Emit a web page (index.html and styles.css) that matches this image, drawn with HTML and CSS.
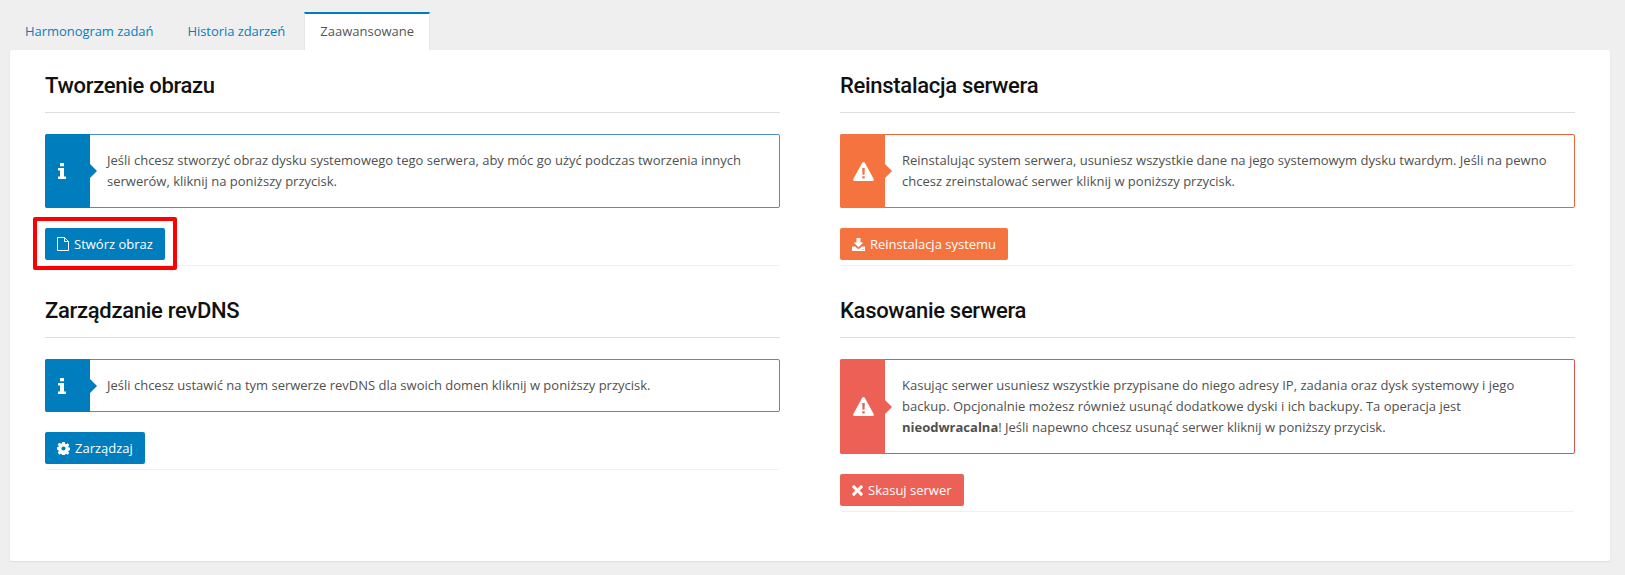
FILE: index.html
```html
<!DOCTYPE html>
<html lang="pl">
<head>
    <meta charset="UTF-8">
    <meta name="viewport" content="width=device-width, initial-scale=1.0">
    <title>Zaawansowane</title>
    <link rel="stylesheet" href="styles.css">
</head>
<body>
    <ul class="tabs">
        <li class="tab">Harmonogram zadań</li>
        <li class="tab">Historia zdarzeń</li>
        <li class="tab tab-active">Zaawansowane</li>
    </ul>

    <div class="panel">
        <div class="column">
            <section class="block">
                <h2 class="block-title">Tworzenie obrazu</h2>
                <div class="alert alert-info">
                    <div class="alert-icon">
                        <svg width="8" height="16" viewBox="0 0 10 18" preserveAspectRatio="none"><path fill="#fff" d="M2.500 0h5v3.600h-5zM0 5.600h7.500v9.600H10V18H0v-2.800h2.500V8.400H0z"/></svg>
                    </div>
                    <p class="alert-text">Jeśli chcesz stworzyć obraz dysku systemowego tego serwera, aby móc go użyć podczas tworzenia innych serwerów, kliknij na poniższy przycisk.</p>
                </div>
                <div class="actions">
                    <span class="highlight">
                        <button class="btn btn-info">
                            <svg width="12" height="14" viewBox="0 0 12 14"><path fill="none" stroke="#fff" d="M.5.500h7l4 4v9H.5zM7.500.500v4h4"/></svg>
                            Stwórz obraz
                        </button>
                    </span>
                </div>
            </section>

            <section class="block">
                <h2 class="block-title">Zarządzanie revDNS</h2>
                <div class="alert alert-info">
                    <div class="alert-icon">
                        <svg width="8" height="16" viewBox="0 0 10 18" preserveAspectRatio="none"><path fill="#fff" d="M2.500 0h5v3.600h-5zM0 5.600h7.500v9.600H10V18H0v-2.800h2.500V8.400H0z"/></svg>
                    </div>
                    <p class="alert-text">Jeśli chcesz ustawić na tym serwerze revDNS dla swoich domen kliknij w poniższy przycisk.</p>
                </div>
                <div class="actions">
                    <button class="btn btn-info">
                        <svg width="13" height="13" viewBox="0 0 13 13"><path fill="#fff" fill-rule="evenodd" d="M5.300 0h2.400l.4 1.800 1 .5 1.500-1.100 1.700 1.700-1.100 1.500.5 1 1.300.4v2.400l-1.300.4-.5 1 1.100 1.500-1.700 1.700-1.500-1.100-1 .5-.4 1.800H5.300l-.4-1.800-1-.5-1.500 1.100L.7 10.600l1.100-1.500-.5-1L0 7.700V5.300l1.300-.4.5-1L.7 2.400 2.400.7l1.500 1.100 1-.5zM6.500 4.400a2.100 2.100 0 1 0 0 4.200 2.100 2.100 0 0 0 0-4.200z"/></svg>
                        Zarządzaj
                    </button>
                </div>
            </section>
        </div>

        <div class="column">
            <section class="block">
                <h2 class="block-title">Reinstalacja serwera</h2>
                <div class="alert alert-warning">
                    <div class="alert-icon">
                        <svg width="21" height="19" viewBox="0 0 21 19"><path fill="#fff" fill-rule="evenodd" d="M10.500 0c.6 0 1 .3 1.300.8l9 16.400c.5 1-.2 1.800-1.200 1.800H1.400c-1 0-1.700-.9-1.200-1.800l9-16.400c.3-.5.7-.8 1.300-.8zM9.200 6l.3 6.800h2L11.800 6zM9.300 14.300v2.300h2.400v-2.300z"/></svg>
                    </div>
                    <p class="alert-text">Reinstalując system serwera, usuniesz wszystkie dane na jego systemowym dysku twardym. Jeśli na pewno chcesz zreinstalować serwer kliknij w poniższy przycisk.</p>
                </div>
                <div class="actions">
                    <button class="btn btn-warning">
                        <svg width="13" height="13" viewBox="0 0 13 13"><path fill="#fff" fill-rule="evenodd" d="M4.500 0h4v4.500h2.800L6.500 9.300 1.700 4.500h2.800zM0 8.500h3.200l2.300 2.300h2l2.300-2.300H13V13H0zM9.800 10.900v.9h.9v-.9zM11.300 10.900v.9h.9v-.9z"/></svg>
                        Reinstalacja systemu
                    </button>
                </div>
            </section>

            <section class="block">
                <h2 class="block-title">Kasowanie serwera</h2>
                <div class="alert alert-danger">
                    <div class="alert-icon">
                        <svg width="21" height="19" viewBox="0 0 21 19"><path fill="#fff" fill-rule="evenodd" d="M10.500 0c.6 0 1 .3 1.300.8l9 16.400c.5 1-.2 1.800-1.200 1.800H1.400c-1 0-1.700-.9-1.200-1.800l9-16.400c.3-.5.7-.8 1.300-.8zM9.200 6l.3 6.800h2L11.800 6zM9.300 14.300v2.300h2.400v-2.300z"/></svg>
                    </div>
                    <p class="alert-text">Kasując serwer usuniesz wszystkie przypisane do niego adresy IP, zadania oraz dysk systemowy i jego backup. Opcjonalnie możesz również usunąć dodatkowe dyski i ich backupy. Ta operacja jest <strong>nieodwracalna</strong>! Jeśli napewno chcesz usunąć serwer kliknij w poniższy przycisk.</p>
                </div>
                <div class="actions">
                    <button class="btn btn-danger">
                        <svg width="11" height="11" viewBox="0 0 11 11"><path fill="#fff" d="M2.400.3l3.100 3.100L8.600.3c.3-.3.7-.3 1 0l1.100 1.100c.3.3.3.7 0 1L7.600 5.500l3.100 3.100c.3.3.3.7 0 1l-1.100 1.100c-.3.3-.7.3-1 0L5.500 7.600l-3.100 3.100c-.3.3-.7.3-1 0L.3 9.600c-.3-.3-.3-.7 0-1l3.100-3.100L.3 2.400c-.3-.3-.3-.7 0-1L1.400.3c.3-.3.7-.3 1 0z"/></svg>
                        Skasuj serwer
                    </button>
                </div>
            </section>
        </div>
    </div>
</body>
</html>
```

FILE: styles.css
```css
* {
    margin: 0;
    padding: 0;
    box-sizing: border-box;
}

body {
    font-family: "Open Sans", sans-serif;
    font-size: 13px;
    line-height: 21px;
    background: #efefef;
    color: #505050;
    padding: 12px 15px 14px 10px;
}

.tabs {
    display: flex;
    gap: 4px;
    list-style: none;
    height: 38px;
}

.tab {
    padding: 9px 15px 0;
    color: #0a7dbd;
    font-size: 13px;
    letter-spacing: -0.05px;
}

.tab-active {
    background: #fff;
    border-top: 2px solid #007dbc;
    border-left: 1px solid #e6e6e6;
    border-right: 1px solid #e6e6e6;
    padding-top: 7px;
    letter-spacing: 0;
    color: #555;
}

.panel {
    display: grid;
    grid-template-columns: 735px 735px;
    column-gap: 60px;
    height: 511px;
    padding: 0 35px;
    background: #fff;
    border-radius: 2px;
    box-shadow: 0 1px 2px rgba(0, 0, 0, 0.08);
}

.block {
    padding-top: 15px;
}

.block + .block {
    padding-top: 24px;
}

.block-title {
    height: 48px;
    font-family: Roboto, sans-serif;
    font-size: 22px;
    font-weight: 500;
    line-height: 42px;
    letter-spacing: -0.3px;
    color: #111;
    border-bottom: 1px solid #ddd;
    margin-bottom: 21px;
}

.alert {
    display: flex;
    align-items: center;
    border: 1px solid;
    border-radius: 2px;
    background: #fff;
}

.alert-icon {
    position: relative;
    align-self: stretch;
    flex: 0 0 45px;
    margin: -1px 0 -1px -1px;
    padding-left: 13px;
    display: flex;
    align-items: center;
    border-radius: 2px 0 0 2px;
}

.alert-icon::after {
    content: "";
    position: absolute;
    left: 100%;
    top: 50%;
    margin-top: -7px;
    border: 7px solid transparent;
    border-right-width: 0;
    border-left-color: inherit;
}

.alert-text {
    padding: 15px 16px 15px 17px;
    flex: 1;
}

.alert-info { border-color: #4a90c8; }
.alert-info .alert-icon { background: #007dbc; border-color: #007dbc; }

.alert-warning { border-color: #e8663a; }
.alert-warning .alert-icon { background: #f4733f; border-color: #f4733f; }

.alert-danger { border-color: #d9574e; }
.alert-danger .alert-icon { background: #ec6055; border-color: #ec6055; }

.actions {
    padding: 20px 0 5px;
    border-bottom: 1px solid #f0f0f0;
    display: flex;
    border-radius: 0 0 3px 3px;
}

.highlight {
    position: relative;
    display: flex;
}

.highlight::after {
    content: "";
    position: absolute;
    inset: -11px -12px -10px -12px;
    border: 4px solid #f00;
    border-radius: 2px;
}

.btn {
    display: flex;
    align-items: center;
    gap: 5px;
    height: 32px;
    padding: 0 12px;
    border: 0;
    border-radius: 2px;
    font-family: "Open Sans", sans-serif;
    font-size: 13px;
    color: #fff;
}

.btn-info { background: #007dbc; }
.btn-warning { background: #f4733f; }
.btn-danger { background: #ec6055; }
```
